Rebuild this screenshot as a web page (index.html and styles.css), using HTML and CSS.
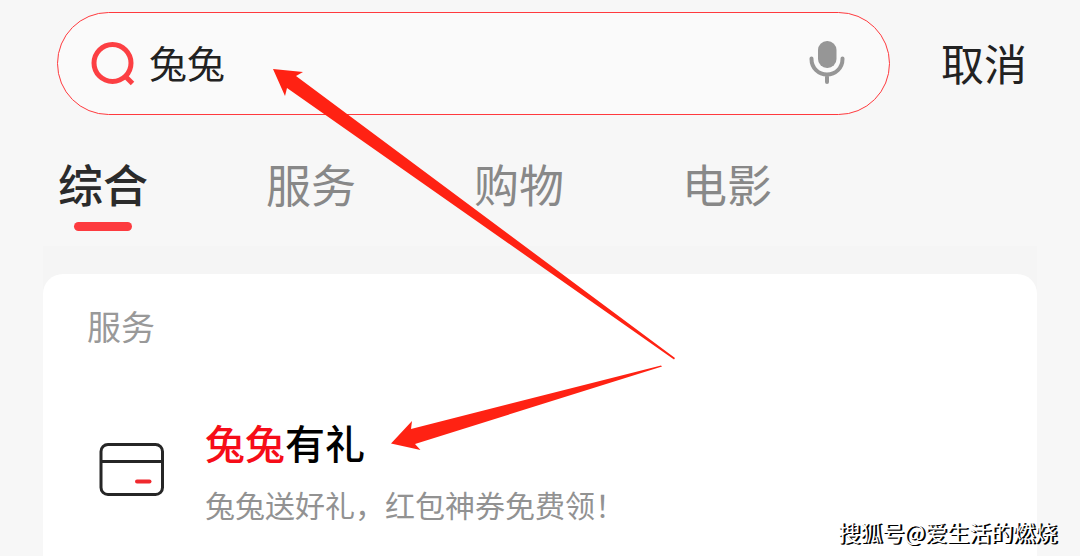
FILE: index.html
```html
<!DOCTYPE html>
<html lang="zh-CN">
<head>
<meta charset="utf-8">
<meta name="viewport" content="width=device-width, initial-scale=1">
<title>搜索</title>
<link rel="stylesheet" href="styles.css">
</head>
<body>
<header class="topbar">
  <form class="search" role="search">
    <svg class="search-icon" viewBox="0 0 44 44" aria-hidden="true">
      <circle cx="21.500" cy="21" r="18.500"/>
      <path d="M34 34 L41.500 41.500"/>
    </svg>
    <input class="search-input" type="text" value="兔兔" aria-label="搜索">
    <button class="mic" type="button" aria-label="语音搜索">
      <svg class="mic-icon" viewBox="0 0 36 44" aria-hidden="true">
        <rect class="mic-head" x="9" y="0" width="18.500" height="27" rx="9"/>
        <path class="mic-stand" d="M2.500 17.500 V18 C2.500 27 9.500 33.500 18 33.500 S33.500 27 33.500 18 V17.500 M18 34 V41"/>
      </svg>
    </button>
  </form>
  <button class="cancel" type="button">取消</button>
</header>

<nav class="tabs" aria-label="搜索分类">
  <a class="tab tab-active" href="#all" aria-current="page">综合</a>
  <a class="tab" href="#service">服务</a>
  <a class="tab" href="#shopping">购物</a>
  <a class="tab" href="#movie">电影</a>
</nav>

<main class="results">
  <section class="card">
    <h2 class="card-heading">服务</h2>
    <a class="result" href="#result">
      <svg class="result-icon" viewBox="0 0 66 54" aria-hidden="true">
        <rect class="line" x="2" y="2.500" width="61.500" height="50" rx="7"/>
        <path class="line" d="M2 19.500 H63.500"/>
        <path class="accent" d="M38 39.500 H50.500"/>
      </svg>
      <span class="result-text">
        <span class="result-title"><em class="match">兔兔</em>有礼</span>
        <span class="result-desc">兔兔送好礼，红包神券免费领！</span>
      </span>
    </a>
  </section>
</main>

<svg class="arrows" viewBox="0 0 1080 556" aria-hidden="true">
  <path d="M273 69 L303 72 L296 76 L675 358 L674 359.500 L287 88 L285 96 Z"/>
  <path d="M391 443.500 L412 421 L411 429 L661 365.500 L662 366.500 L415 444 L420.500 450 Z"/>
</svg>
<p class="watermark">搜狐号@爱生活的燃烧</p>
</body>
</html>
```
FILE: styles.css
```css
* {
  box-sizing: border-box;
}

body {
  position: relative;
  display: flex;
  flex-direction: column;
  min-height: 100vh;
  margin: 0;
  background: #f7f7f7;
  color: #222;
  font-family: "Noto Sans CJK SC", sans-serif;
}

button {
  padding: 0;
  border: 0;
  background: none;
  color: inherit;
  font: inherit;
}

a {
  color: inherit;
  text-decoration: none;
}

.topbar {
  display: flex;
  align-items: center;
  gap: 51px;
  padding: 12px 53px 0 57px;
}

.search {
  display: flex;
  flex: 1;
  align-items: center;
  min-width: 0;
  height: 103px;
  margin: 0;
  padding: 0 44px 0 33px;
  border: 1px solid #ff3a3e;
  border-radius: 52px;
  background: #fafafa;
}

.search-icon {
  flex: none;
  width: 44px;
  height: 44px;
  fill: none;
  stroke: #fc3f43;
  stroke-width: 5;
}

.search-input {
  flex: 1;
  min-width: 0;
  height: 60px;
  margin-left: 14px;
  padding: 0 0 4px;
  border: 0;
  outline: 0;
  background: transparent;
  color: #222;
  font: 400 38px/56px "Noto Sans CJK SC", sans-serif;
}

.mic {
  flex: none;
  padding-bottom: 2px;
}

.mic-icon {
  display: block;
  width: 36px;
  height: 44px;
}

.mic-head {
  fill: #969696;
}

.mic-stand {
  fill: none;
  stroke: #969696;
  stroke-width: 4;
  stroke-linecap: round;
}

.cancel {
  flex: none;
  padding-bottom: 4px;
  font-size: 43px;
  font-weight: 400;
  line-height: 60px;
}

.tabs {
  display: flex;
  gap: 118px;
  padding: 39px 58px 15px;
}

.tab {
  flex: none;
  color: #888;
  font-size: 45px;
  font-weight: 400;
  line-height: 60px;
}

.tab-active {
  color: #2b2b2b;
  font-weight: 500;
}

.tab-active::after {
  display: block;
  width: 58px;
  height: 9px;
  margin: 8px auto 0;
  border-radius: 5px;
  background: #fd3b3f;
  content: "";
}

.results {
  display: flex;
  flex: 1;
  flex-direction: column;
  margin: 0 43px;
  padding-top: 28px;
  background: linear-gradient(#f5f5f5 50px, #f7f7f7 50px);
}

.card {
  flex: 1;
  padding: 32px 44px 28px;
  border-radius: 20px 20px 0 0;
  background: #fff;
}

.card-heading {
  margin: 0 0 68px;
  color: #999;
  font-size: 34px;
  font-weight: 400;
  line-height: 40px;
}

.result {
  display: flex;
  align-items: center;
  gap: 40px;
  padding-left: 12px;
}

.result-icon {
  flex: none;
  width: 66px;
  height: 54px;
  fill: none;
  stroke-width: 3;
}

.line {
  stroke: #262626;
}

.accent {
  stroke: #f0292e;
  stroke-width: 4;
  stroke-linecap: round;
}

.result-text {
  display: flex;
  flex-direction: column;
  gap: 14px;
}

.result-title {
  color: #000;
  font-size: 40px;
  font-weight: 500;
  line-height: 56px;
}

.match {
  color: #f60d18;
  font-style: normal;
}

.result-desc {
  color: #929292;
  font-size: 30px;
  font-weight: 400;
  line-height: 40px;
}

.arrows {
  position: absolute;
  top: 0;
  left: 0;
  width: 1080px;
  height: 556px;
  fill: #ff2213;
  pointer-events: none;
}

.watermark {
  position: absolute;
  right: 23px;
  bottom: 10px;
  margin: 0;
  color: #fff;
  font-size: 22px;
  font-weight: 400;
  line-height: 30px;
  text-shadow: 1px 1px 0 #000, 2px 1px 0 #000;
}
```
